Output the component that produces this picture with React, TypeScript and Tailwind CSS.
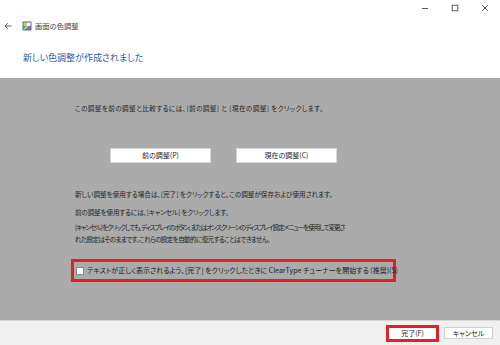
import React from 'react'

const jp = { fontFamily: '"Noto Sans CJK JP", "Noto Sans", sans-serif' }

function WindowControls() {
  return (
    <div className="flex justify-end h-[15px] items-center">
      <div className="w-[30px] flex justify-center">
        <svg width="8" height="8" viewBox="0 0 8 8">
          <path d="M1 4.5h6" stroke="#333" strokeWidth="0.8" />
        </svg>
      </div>
      <div className="w-[30px] flex justify-center">
        <svg width="8" height="8" viewBox="0 0 8 8">
          <rect x="1.2" y="1.2" width="5.6" height="5.6" fill="none" stroke="#333" strokeWidth="0.8" />
        </svg>
      </div>
      <div className="w-[30px] flex justify-center">
        <svg width="8" height="8" viewBox="0 0 8 8">
          <path d="M1 1l6 6M7 1l-6 6" stroke="#333" strokeWidth="0.8" />
        </svg>
      </div>
    </div>
  )
}

function AppIcon() {
  return (
    <svg width="10" height="10" viewBox="0 0 10 10">
      <rect x="0.5" y="0.5" width="9" height="9" fill="#3d6fc2" rx="0.5" />
      <rect x="1.5" y="1.5" width="3.5" height="3.5" fill="#f4c430" />
      <rect x="5" y="1.5" width="3.5" height="3.5" fill="#eaf3ff" />
      <rect x="1.5" y="5" width="3.5" height="3.5" fill="#46b05a" />
      <rect x="5" y="5" width="3.5" height="3.5" fill="#d94f8f" />
      <path d="M2 8.5L8.5 2" stroke="#ffffff" strokeWidth="1" />
    </svg>
  )
}

function GreyButton({ label }: { label: string }) {
  return (
    <div className="w-[101px] h-[15px] bg-white border border-[#d6d6d6] flex items-center justify-center text-[7px] text-[#222]">
      {label}
    </div>
  )
}

export default function App() {
  return (
    <div
      className="w-[500px] h-[345px] flex flex-col bg-white overflow-hidden [font-feature-settings:'palt']"
      style={jp}
    >
      {/* Header */}
      <div className="h-[78px] flex flex-col">
        <WindowControls />
        <div className="flex items-center h-[16px] mt-[3px]">
          <svg width="8" height="8" viewBox="0 0 8 8" className="ml-[4px]">
            <path d="M7.5 4H1M3.8 1.2L1 4l2.8 2.8" fill="none" stroke="#333" strokeWidth="0.8" />
          </svg>
          <div className="ml-[10px]">
            <AppIcon />
          </div>
          <span className="ml-[3px] text-[7.3px] text-[#444]">画面の色調整</span>
        </div>
        <div className="ml-[23px] mt-[18px] text-[9px] leading-[12px] text-[#2d5aa8]">
          新しい色調整が作成されました
        </div>
      </div>

      {/* Grey body */}
      <div className="flex-1 bg-[#ababab] pl-[75px] text-[6.6px] text-[#222] whitespace-nowrap">
        <p className="mt-[25px] leading-[10px] tracking-[0.4px]">
          この調整を前の調整と比較するには、[前の調整] と [現在の調整] をクリックします。
        </p>
        <div className="flex gap-[25px] mt-[35px] ml-[35px]">
          <GreyButton label="前の調整(P)" />
          <GreyButton label="現在の調整(C)" />
        </div>
        <p className="mt-[26px] leading-[10px]">
          新しい調整を使用する場合は、[完了] をクリックすると、この調整が保存および使用されます。
        </p>
        <p className="mt-[8px] leading-[10px] tracking-[-0.15px]">
          前の調整を使用するには、[キャンセル] をクリックします。
        </p>
        <p className="mt-[4px] leading-[12px]">
          <span className="tracking-[-1.1px]">
            [キャンセル] をクリックしても、ディスプレイのボタン、またはオンスクリーンのディスプレイ設定メニューを使用して変更さ
          </span>
          <br />
          <span className="tracking-[-0.65px]">
            れた設定はそのままです。これらの設定を自動的に復元することはできません。
          </span>
        </p>
        <div className="mt-[14px] ml-[-4px] w-[325px] h-[23px] border-[3px] border-[#e61e28] flex items-center pl-[2px]">
          <div className="w-[8px] h-[8px] shrink-0 bg-white border border-[#8a8a8a]" />
          <span className="ml-[3px] text-[7px]">
            テキストが正しく表示されるよう、[完了] をクリックしたときに ClearType チューナーを開始する (推奨)(S)
          </span>
        </div>
      </div>

      {/* Footer */}
      <div className="h-[25px] bg-[#f0f0f0] border-t border-[#d8d8d8] flex items-center justify-end pr-[7px] gap-[5px] text-[7px] text-[#222]">
        <div className="border-[3px] border-[#e61e28] w-[53px] h-[17px] flex">
          <div className="flex-1 bg-white flex items-center justify-center">完了(F)</div>
        </div>
        <div className="w-[49px] h-[12px] bg-white border border-[#d0d0d0] flex items-center justify-center">
          キャンセル
        </div>
      </div>
    </div>
  )
}
